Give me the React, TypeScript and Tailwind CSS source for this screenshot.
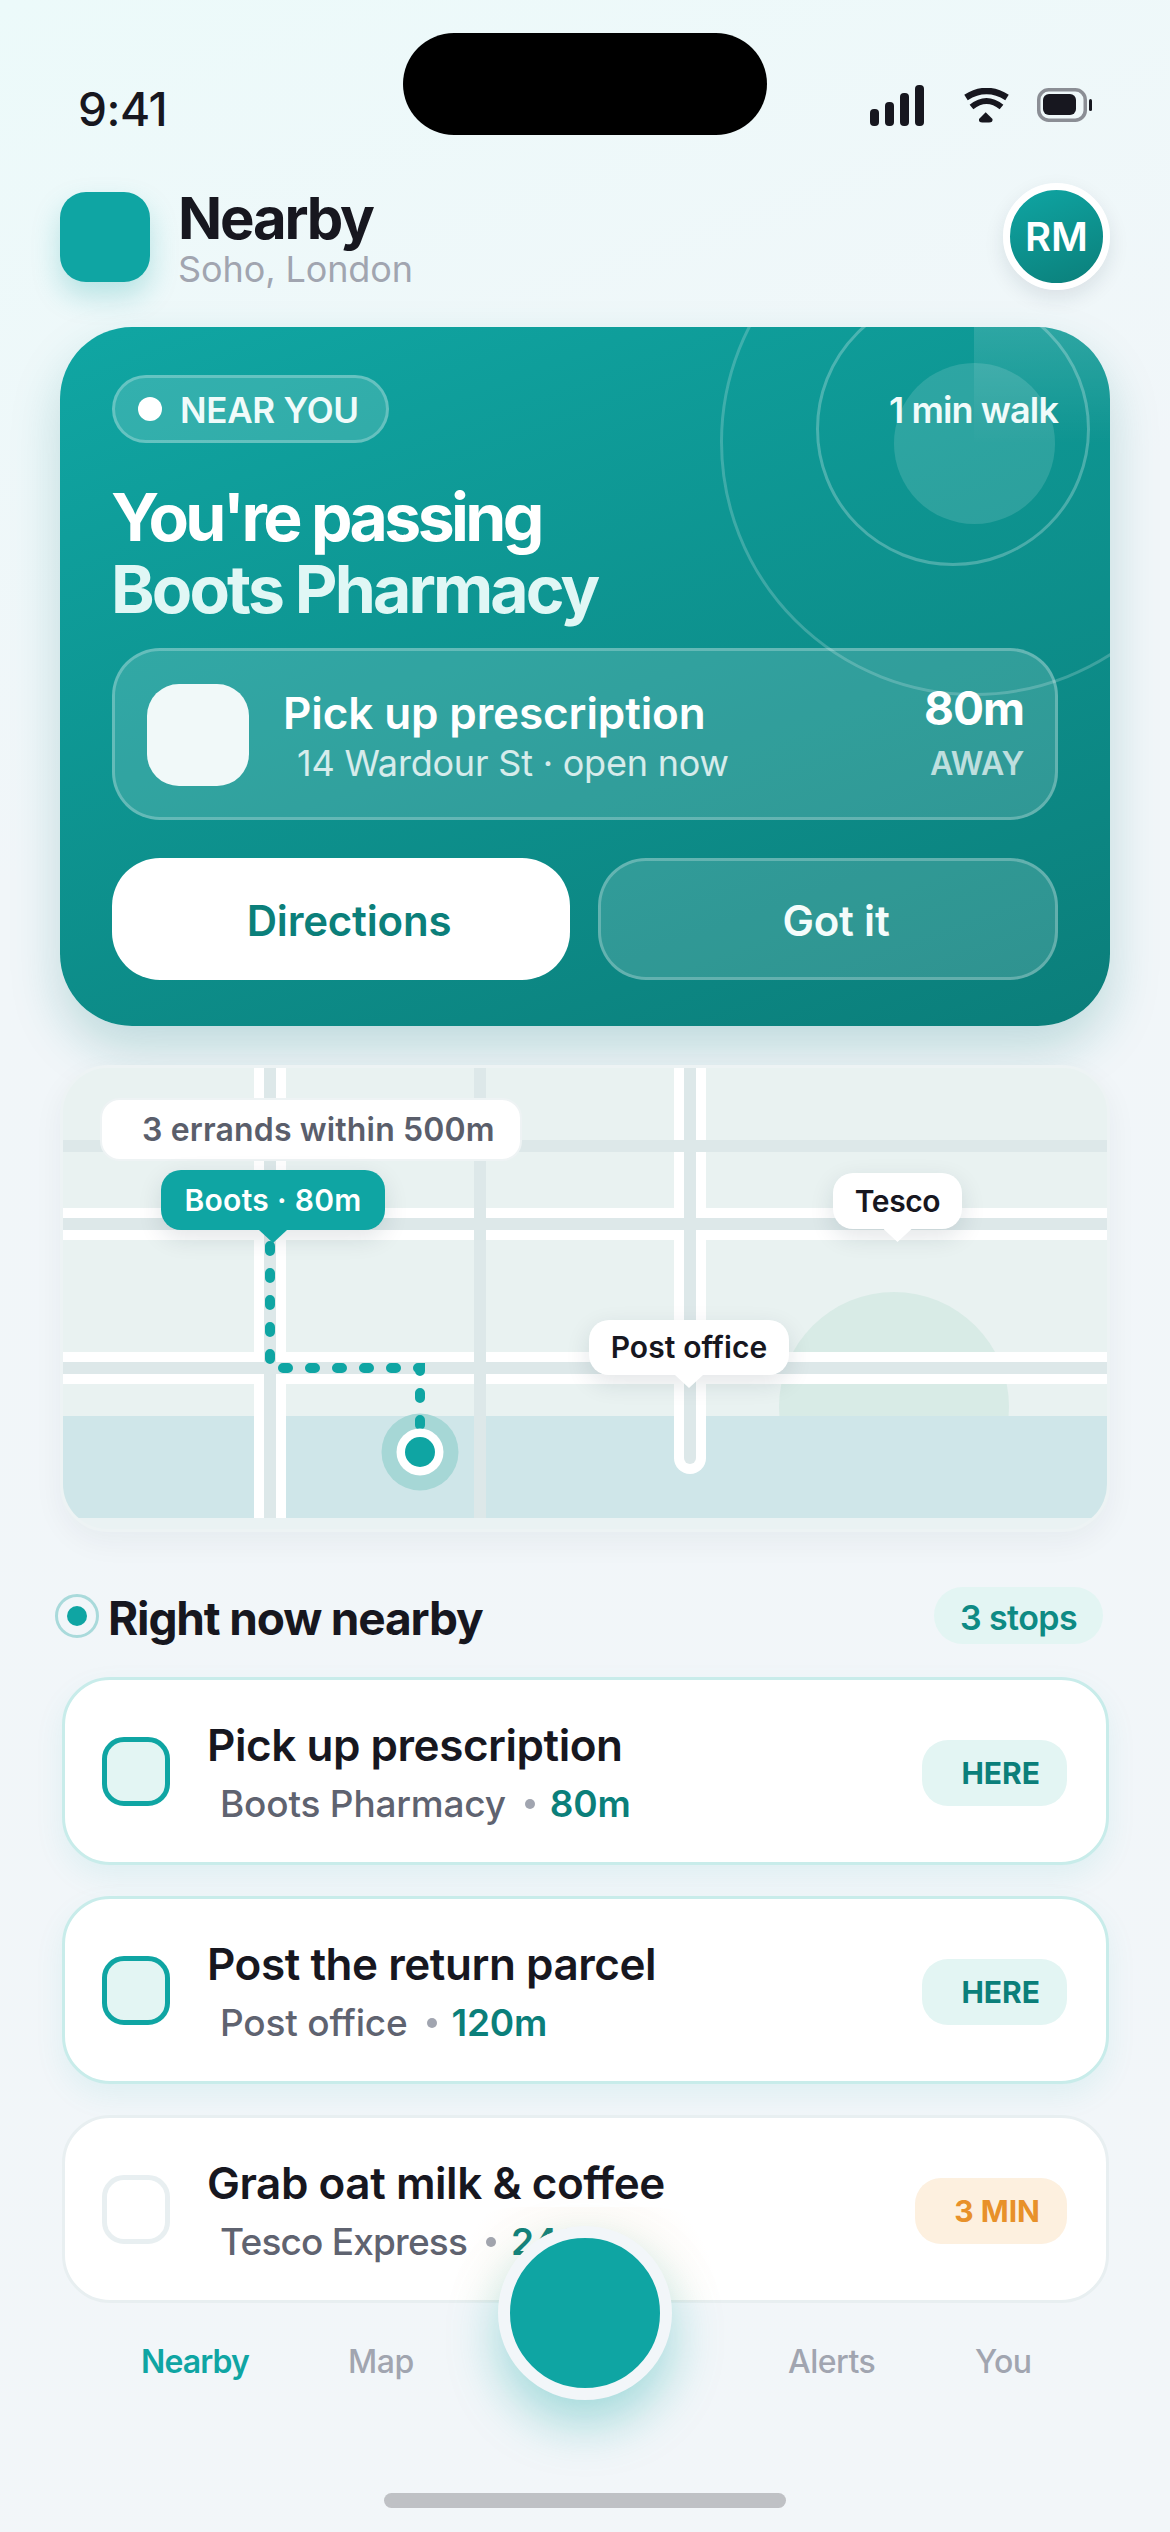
const errands = [
  { title: 'Pick up prescription', place: 'Boots Pharmacy', placeClass: 'tracking-[-0.2px]', dist: '80m', pill: 'HERE', active: true },
  { title: 'Post the return parcel', place: 'Post office', placeClass: 'tracking-[-0.2px]', dist: '120m', pill: 'HERE', active: true },
  { title: 'Grab oat milk & coffee', place: 'Tesco Express', placeClass: 'tracking-[-0.8px]', dist: '240m', pill: '3 MIN', active: false },
];

function StatusIcons() {
  return (
    <div className="flex items-start">
      <svg width="54" height="41" viewBox="0 0 54 41" fill="#17171f">
        <rect x="0" y="24" width="9" height="17" rx="4" />
        <rect x="15" y="17" width="9" height="24" rx="4" />
        <rect x="30" y="8" width="9" height="33" rx="4" />
        <rect x="45" y="0" width="9" height="41" rx="4" />
      </svg>
      <svg className="ml-[39px] mt-[3px]" width="47" height="36" viewBox="0 0 47 36" fill="none" stroke="#17171f">
        <path d="M3 9.5Q23.5 -3.5 44 9.5" strokeWidth="6.5" />
        <path d="M8.5 19Q23.5 7 38.5 19" strokeWidth="6" />
        <path d="M22.7 24.3L29.5 31Q30 34.5 26 34.5H19.4Q15.4 34.5 16 31Z" fill="#17171f" stroke="none" />
      </svg>
      <svg className="ml-[27px] mt-[3px]" width="55" height="34" viewBox="0 0 55 34" fill="none">
        <rect x="1.75" y="1.75" width="46.5" height="30.5" rx="10" stroke="#8b8e95" strokeWidth="3.5" />
        <rect x="6" y="6" width="33" height="21" rx="6" fill="#17171f" />
        <rect x="52" y="11" width="3" height="12" rx="1.5" fill="#17171f" />
      </svg>
    </div>
  );
}

function MapPin({ className, label, tail }: { className: string; label: string; tail: string }) {
  return (
    <div className={`absolute flex items-center justify-center rounded-[20px] text-[30px] font-semibold ${className}`}>
      {label}
      <div className={`absolute left-1/2 top-full h-[13px] w-[28px] -translate-x-1/2 [clip-path:polygon(0_0,100%_0,50%_100%)] ${tail}`} />
    </div>
  );
}

function MapCard() {
  return (
    <div className="relative mt-[39px] h-[467px] overflow-hidden rounded-[48px] border-[3px] border-[#edf3f4] bg-[#eaf2f3] shadow-[0_10px_30px_rgba(20,40,60,0.05)]">
      <svg className="block" width="1044" height="450" viewBox="0 0 1044 450">
        <rect width="1044" height="450" fill="#e9f2f1" />
        <circle cx="831" cy="339" r="115" fill="#d8ebe6" />
        <rect y="348" width="1044" height="102" fill="#cfe6e9" />
        <g stroke="#ffffff" strokeWidth="32" fill="none">
          <path d="M0 156H1044" />
          <path d="M0 300H1044" />
          <path d="M207 0V450" />
          <path d="M627 0V390" strokeLinecap="round" />
        </g>
        <g stroke="#dde8e9" strokeWidth="12" fill="none">
          <path d="M0 78H1044" />
          <path d="M0 156H1044" />
          <path d="M0 300H1044" />
          <path d="M207 0V450" />
          <path d="M417 0V450" />
          <path d="M627 0V390" strokeLinecap="round" />
        </g>
        <circle cx="357" cy="384" r="38.5" fill="#a6d7d6" />
        <path d="M207 178V300H357V360" fill="none" stroke="#0fa5a3" strokeWidth="10" strokeLinecap="round" strokeDasharray="5 22" />
        <circle cx="357" cy="384" r="23.5" fill="#ffffff" />
        <circle cx="357" cy="384" r="15" fill="#0fa5a3" />
      </svg>
      <div className="absolute left-[37px] top-[30px] flex h-[63px] w-[422px] items-center rounded-[20px] border-2 border-[#eef3f4] bg-white pl-[40px] text-[32px] font-semibold tracking-[0.15px] text-[#5a5e6b]">
        3 errands within 500m
      </div>
      <MapPin
        className="left-[98px] top-[102px] h-[60px] w-[224px] bg-[#0fa5a3] tracking-[0.3px] text-white shadow-[0_8px_24px_rgba(20,40,60,0.12)]"
        label="Boots · 80m"
        tail="bg-[#0fa5a3]"
      />
      <MapPin
        className="left-[770px] top-[105px] h-[56px] w-[129px] bg-white tracking-[-0.4px] text-[#17171f] shadow-[0_8px_24px_rgba(20,40,60,0.12)]"
        label="Tesco"
        tail="bg-white"
      />
      <MapPin
        className="left-[526px] top-[252px] h-[55px] w-[200px] bg-white tracking-[0.1px] text-[#17171f] shadow-[0_8px_24px_rgba(20,40,60,0.12)]"
        label="Post office"
        tail="bg-white"
      />
    </div>
  );
}

function ErrandCard({ title, place, placeClass, dist, pill, active }: (typeof errands)[number]) {
  return (
    <div
      className={`flex h-[188px] items-center justify-between rounded-[48px] border-[3px] bg-white pl-[37px] pr-[39px] ${
        active ? 'border-[#c8ecea] shadow-[0_12px_30px_rgba(15,165,163,0.08)]' : 'border-[#e8eff1]'
      }`}
    >
      <div className="flex items-center">
        <div
          className={`h-[69px] w-[68px] rounded-[22px] border-[5px] ${
            active ? 'border-[#0fa5a3] bg-[#e3f5f3]' : 'border-[#e8eff1] bg-white'
          }`}
        />
        <div className="ml-[37px]">
          <div className="text-[44px] font-semibold leading-[56px] tracking-[-0.45px] text-[#17171f]">{title}</div>
          <div className="ml-[13px] mt-[9px] flex items-center text-[37px] font-medium leading-[44px] text-[#5f6370]">
            <span className={placeClass}>{place}</span>
            <span className="ml-[19px] mr-[15px] h-[10px] w-[10px] rounded-full bg-[#a1a5b0]" />
            <span className="font-semibold tracking-[-0.2px] text-[#0b7f7a]">{dist}</span>
          </div>
        </div>
      </div>
      <div
        className={`mt-[3px] flex h-[66px] items-center justify-end rounded-[26px] pr-[27px] pt-[2px] text-[30px] font-bold ${
          active ? 'w-[145px] bg-[#e3f5f3] text-[#0b7f7a]' : 'w-[152px] bg-[#fdf0df] text-[#e8912a]'
        }`}
      >
        {pill}
      </div>
    </div>
  );
}

export default function App() {
  return (
    <div className="relative h-[2532px] w-[1170px] overflow-hidden bg-[linear-gradient(160deg,#ecfafa_0%,#f1f6f9_30%,#f2f6f9_100%)] px-[60px] [font-family:Inter,sans-serif]">
      <div className="absolute left-[403px] top-[33px] h-[102px] w-[364px] rounded-full bg-black" />
      <div className="flex items-start justify-between pl-[18px] pr-[18px] pt-[85px]">
        <div className="text-[46px] font-medium leading-[48px] tracking-[-0.5px] text-[#17171f]">9:41</div>
        <StatusIcons />
      </div>

      <div className="mt-[50px] flex h-[107px] items-center justify-between">
        <div className="flex items-center">
          <div className="h-[90px] w-[90px] rounded-[26px] bg-[#0fa5a3] shadow-[0_14px_28px_rgba(15,165,163,0.25)]" />
          <div className="ml-[28px] mt-[4px]">
            <div className="text-[58px] font-bold leading-[60px] tracking-[-2.2px] text-[#17171f]">Nearby</div>
            <div className="mt-[1px] text-[36px] leading-[40px] tracking-[-0.1px] text-[#a1a5b0]">Soho, London</div>
          </div>
        </div>
        <div className="flex h-[107px] w-[107px] items-center justify-center rounded-full border-[7px] border-white bg-[linear-gradient(160deg,#0fa5a3,#0b7f7a)] text-[40px] font-semibold text-white shadow-[0_8px_20px_rgba(20,40,60,0.1)]">
          RM
        </div>
      </div>

      <div className="relative mt-[37px] h-[699px] overflow-hidden rounded-[72px] bg-[linear-gradient(160deg,#10a6a3,#0b7e7a)] px-[52px] pt-[48px] shadow-[0_24px_50px_rgba(15,125,125,0.22)]">
        <div className="absolute left-[914px] top-0 h-[117px] w-[136px] bg-[linear-gradient(to_bottom,rgba(255,255,255,0.13),rgba(255,255,255,0))]" />
        <div className="absolute left-[834px] top-[36px] h-[161px] w-[161px] rounded-full bg-white/[0.13]" />
        <div className="absolute left-[756px] top-[-35px] h-[274px] w-[274px] rounded-full border-[3px] border-white/25" />
        <div className="absolute left-[660px] top-[-139px] h-[508px] w-[508px] rounded-full border-[3px] border-white/20" />

        <div className="relative flex items-center justify-between">
          <div className="flex h-[68px] w-[277px] items-center rounded-full border-[3px] border-white/25 bg-white/15 pl-[23px] text-[35px] font-semibold tracking-[-0.3px] text-[#f0fbfa]">
            <span className="mr-[18px] h-[24px] w-[24px] rounded-full bg-white" />
            <span className="mt-[2px]">NEAR YOU</span>
          </div>
          <div className="mt-[2px] text-[36px] font-semibold tracking-[-0.9px] text-[#f0fbfa]">1 min walk</div>
        </div>

        <div className="relative -ml-[1px] mt-[38px] text-[66px] font-bold leading-[72px] text-white">
          <div className="tracking-[-3.6px]">You're passing</div>
          <div className="tracking-[-2.85px] text-[#e0f7f5]">Boots Pharmacy</div>
        </div>

        <div className="relative mt-[23px] flex h-[172px] items-center justify-between rounded-[48px] border-[3px] border-white/25 bg-white/15 pl-[32px] pr-[31px]">
          <div className="flex items-center">
            <div className="mt-[2px] h-[102px] w-[102px] rounded-[32px] bg-[#f1f9f9]" />
            <div className="ml-[34px] mt-[4px]">
              <div className="text-[44px] font-semibold leading-[52px] tracking-[-0.1px] text-white">Pick up prescription</div>
              <div className="ml-[14px] mt-[2px] text-[36px] leading-[44px] tracking-[-0.2px] text-white/80">14 Wardour St · open now</div>
            </div>
          </div>
          <div className="text-right">
            <div className="-mt-[3px] text-[46px] font-bold leading-[54px] tracking-[-1px] text-white">80m</div>
            <div className="mt-[9px] text-[32px] font-semibold leading-[40px] tracking-[-0.3px] text-white/70">AWAY</div>
          </div>
        </div>

        <div className="relative mt-[38px] flex gap-[28px]">
          <div className="flex h-[122px] w-[458px] items-center justify-center rounded-[48px] bg-white pl-[16px] pt-[3px] text-[42px] font-semibold tracking-[-0.2px] text-[#0b7f7a]">
            Directions
          </div>
          <div className="flex h-[122px] flex-1 items-center justify-center rounded-[48px] border-[3px] border-white/25 bg-white/15 pl-[16px] pt-[3px] text-[42px] font-semibold tracking-[-0.2px] text-[#f4fcfb]">
            Got it
          </div>
        </div>
      </div>

      <MapCard />

      <div className="mt-[55px] flex h-[57px] items-center justify-between">
        <div className="flex items-center">
          <div className="-ml-[5px] flex h-[44px] w-[44px] items-center justify-center rounded-full border-[3px] border-[#a9dadb]">
            <div className="h-[20px] w-[20px] rounded-full bg-[#0fa5a3]" />
          </div>
          <div className="ml-[9px] mt-[5px] text-[46px] font-bold tracking-[-1.15px] text-[#17171f]">Right now nearby</div>
        </div>
        <div className="mr-[7px] flex h-[57px] w-[169px] items-center justify-center rounded-full bg-[#e3f5f3] pt-[3px] text-[34px] font-semibold tracking-[-0.6px] text-[#0e8a84]">
          3 stops
        </div>
      </div>

      <div className="ml-[2px] mr-[1px] mt-[33px] flex flex-col gap-[31px]">
        {errands.map((e) => (
          <ErrandCard key={e.title} {...e} />
        ))}
      </div>

      <div className="absolute left-[425px] top-[2207px] h-[95px] w-[320px] overflow-hidden rounded-t-full bg-[radial-gradient(circle_at_50%_100%,rgba(245,165,80,0.12),rgba(245,165,80,0)_72%)]" />
      <div className="absolute left-[498px] top-[2226px] h-[174px] w-[174px] rounded-full border-[12px] border-[#f2f6f9] bg-[#0fa5a3] shadow-[0_24px_50px_rgba(15,165,163,0.35)]" />

      <div className="absolute left-[141px] top-[2342px] flex text-[32px] font-medium leading-[40px] tracking-[-0.5px] text-[#a1a5b0]">
        <span className="w-[207px] font-semibold tracking-[-0.9px] text-[#0fa5a3]">Nearby</span>
        <span className="w-[440px]">Map</span>
        <span className="w-[187px]">Alerts</span>
        <span>You</span>
      </div>
      <div className="absolute left-[384px] top-[2493px] h-[15px] w-[402px] rounded-full bg-[#bfc1c5]" />
    </div>
  );
}
